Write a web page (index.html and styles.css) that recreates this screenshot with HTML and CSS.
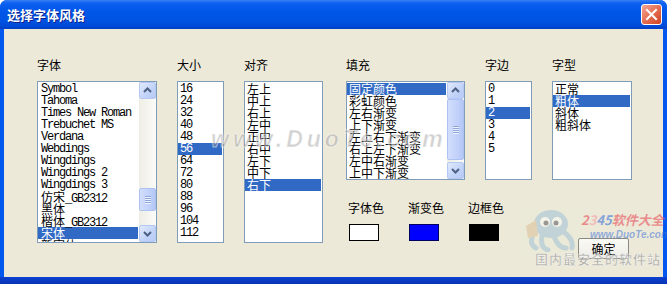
FILE: index.html
```html
<!DOCTYPE html>
<html lang="zh-CN">
<head>
  <meta charset="UTF-8">
  <title>选择字体风格</title>
  <link rel="stylesheet" href="styles.css">
</head>
<body>

<div class="window">
  <div class="titlebar">
    <span class="title">选择字体风格</span>
    <span class="close">
      <svg width="19" height="19" viewBox="0 0 19 19"><path d="M5 5 L14 14 M14 5 L5 14" stroke="#fff" stroke-width="2" stroke-linecap="square"/></svg>
    </span>
  </div>

  <div class="client">
    <div class="group g-font">
      <div class="label">字体</div>
      <div class="list tall">
        <div class="items mono">
          <div>Symbol</div>
          <div>Tahoma</div>
          <div>Times New Roman</div>
          <div>Trebuchet MS</div>
          <div>Verdana</div>
          <div>Webdings</div>
          <div>Wingdings</div>
          <div>Wingdings 2</div>
          <div>Wingdings 3</div>
          <div><span class="cn">仿宋</span>_GB2312</div>
          <div><span class="cn">黑体</span></div>
          <div><span class="cn">楷体</span>_GB2312</div>
          <div class="sel"><span class="cn">宋体</span></div>
          <div><span class="cn">新宋体</span></div>
        </div>
        <div class="scrollbar">
          <div class="sb-btn"><svg width="15" height="15" viewBox="0 0 15 15"><path d="M4 9 L7.5 5.5 L11 9" fill="none" stroke="#4d6185" stroke-width="2"/></svg></div>
          <div class="sb-track"><div class="sb-thumb font-thumb"><i></i><i></i><i></i><i></i></div></div>
          <div class="sb-btn"><svg width="15" height="15" viewBox="0 0 15 15"><path d="M4 6 L7.5 9.5 L11 6" fill="none" stroke="#4d6185" stroke-width="2"/></svg></div>
        </div>
      </div>
    </div>

    <div class="group g-size">
      <div class="label">大小</div>
      <div class="list tall">
        <div class="items mono">
          <div>16</div><div>24</div><div>32</div><div>40</div><div>48</div>
          <div class="sel">56</div>
          <div>64</div><div>72</div><div>80</div><div>88</div><div>96</div>
          <div>104</div><div>112</div>
        </div>
      </div>
    </div>

    <div class="group g-align">
      <div class="label">对齐</div>
      <div class="list tall">
        <div class="items">
          <div>左上</div><div>中上</div><div>右上</div>
          <div>左中</div><div>正中</div><div>右中</div>
          <div>左下</div><div>中下</div>
          <div class="sel">右下</div>
        </div>
      </div>
    </div>

    <div class="right">
      <div class="row-top">
        <div class="group g-fill">
          <div class="label">填充</div>
          <div class="list short">
            <div class="items">
              <div class="sel">固定颜色</div>
              <div>彩虹颜色</div>
              <div>左右渐变</div>
              <div>上下渐变</div>
              <div>左上右下渐变</div>
              <div>右上左下渐变</div>
              <div>左中右渐变</div>
              <div>上中下渐变</div>
            </div>
            <div class="scrollbar">
              <div class="sb-btn"><svg width="15" height="15" viewBox="0 0 15 15"><path d="M4 9 L7.5 5.5 L11 9" fill="none" stroke="#4d6185" stroke-width="2"/></svg></div>
              <div class="sb-track"><div class="sb-thumb fill-thumb"><i></i><i></i><i></i><i></i></div></div>
              <div class="sb-btn"><svg width="15" height="15" viewBox="0 0 15 15"><path d="M4 6 L7.5 9.5 L11 6" fill="none" stroke="#4d6185" stroke-width="2"/></svg></div>
            </div>
          </div>
        </div>

        <div class="group g-edge">
          <div class="label">字边</div>
          <div class="list short">
            <div class="items mono">
              <div>0</div><div>1</div>
              <div class="sel">2</div>
              <div>3</div><div>4</div><div>5</div>
            </div>
          </div>
        </div>

        <div class="group g-style">
          <div class="label">字型</div>
          <div class="list short">
            <div class="items">
              <div>正常</div>
              <div class="sel">粗体</div>
              <div>斜体</div>
              <div>粗斜体</div>
            </div>
          </div>
        </div>
      </div>

      <div class="row-bottom">
        <div class="colors">
          <div class="color-item">
            <div class="label">字体色</div>
            <div class="swatch white"></div>
          </div>
          <div class="color-item">
            <div class="label">渐变色</div>
            <div class="swatch blue"></div>
          </div>
          <div class="color-item">
            <div class="label">边框色</div>
            <div class="swatch black"></div>
          </div>
        </div>
        <button class="ok">确定</button>
      </div>
    </div>
  </div>

  <!-- watermarks from the screenshot source -->
  <div class="wm-site">www.DuoTe.com</div>
  <svg class="wm-mascot" width="52" height="46" viewBox="0 0 52 46">
    <ellipse cx="27" cy="18" rx="17" ry="14" fill="#8fb8d8"/>
    <path d="M10 26 Q4 38 12 42 M18 30 Q16 42 24 44 M30 30 Q34 42 42 42 M40 26 Q50 34 48 42" fill="none" stroke="#8fb8d8" stroke-width="5" stroke-linecap="round"/>
    <circle cx="21" cy="16" r="5" fill="#fff"/><circle cx="33" cy="16" r="5" fill="#fff"/>
    <circle cx="22" cy="17" r="2.5" fill="#334"/><circle cx="32" cy="17" r="2.5" fill="#334"/>
    <path d="M2 20 L12 14 L14 30 L4 32 Z" fill="#d9b38a"/>
  </svg>
  <div class="wm-brand"><span class="r">2</span><span class="p">3</span><span class="b">45</span><span class="r">软件大全</span></div>
  <div class="wm-url">www.DuoTe.com</div>
  <div class="wm-slogan">国内最安全的软件站</div>
</div>

</body>
</html>
```

FILE: styles.css
```css
body {
  margin: 0;
  background: #fff;
  font-family: "Noto Sans CJK SC", sans-serif;
}
.window {
  position: relative;
  width: 667px;
  height: 284px;
  display: flex;
  flex-direction: column;
  border-radius: 7px 7px 0 0;
  overflow: hidden;
  background: linear-gradient(#0058ee calc(100% - 7px), #0b42d0 calc(100% - 7px), #0733b5);
}
.titlebar {
  height: 29px;
  flex: none;
  display: flex;
  align-items: center;
  padding: 0 5px 0 7px;
  background: linear-gradient(#3a80f3 0, #1a6af2 2px, #0a5ef0 4px, #0056e8 12px, #0054e3 20px, #004ad8 26px, #003fc2 29px);
}
.title {
  flex: 1;
  color: #fff;
  font-size: 13px;
  font-weight: bold;
  text-shadow: 1px 1px 0 #0d1f8a;
}
.close {
  width: 21px;
  height: 21px;
  box-sizing: border-box;
  border: 1px solid #fff;
  border-radius: 3px;
  background: linear-gradient(135deg, #f4a793, #e2694d 55%, #cf4322);
  display: flex;
  align-items: center;
  justify-content: center;
}
.client {
  flex: 1;
  margin: 0 4px 7px 4px;
  background: #ece9d8;
  display: flex;
  gap: 20px;
  padding: 30px 0 0 33px;
}
.label {
  font-size: 12px;
  line-height: 12px;
  height: 12px;
  margin-bottom: 10px;
  color: #000;
}
.list {
  box-sizing: border-box;
  border: 1px solid #7f9db9;
  background: #fff;
  display: flex;
  overflow: hidden;
}
.list.tall {
  height: 162px;
}
.list.short {
  height: 99px;
}
.items {
  flex: 1;
  padding-top: 1px;
  overflow: hidden;
  font-size: 12px;
  line-height: 12px;
}
.items div {
  height: 12px;
  padding-left: 2px;
  margin-right: 1px;
  white-space: nowrap;
}
.items.mono {
  font-family: "Liberation Mono", "Noto Sans CJK SC", monospace;
  letter-spacing: -1.2px;
}
.g-font .items div {
  padding-left: 3px;
}
.cn {
  font-family: "Noto Sans CJK SC", sans-serif;
  letter-spacing: 0;
}
.items .sel {
  background: #316ac5;
  color: #fff;
}
.g-font { width: 120px; }
.g-size { width: 47px; }
.g-align { width: 79px; }
.g-fill { width: 119px; }
.g-edge { width: 47px; }
.g-style { width: 80px; }

.scrollbar {
  width: 17px;
  flex: none;
  display: flex;
  flex-direction: column;
  background: linear-gradient(to right, #eeede5, #fbfbf8);
}
.sb-btn {
  height: 17px;
  flex: none;
  box-sizing: border-box;
  border: 1px solid #b5c8f4;
  border-radius: 2px;
  background: linear-gradient(135deg, #e1eafd, #c2d3f8 60%, #b6caf4);
  display: flex;
  align-items: center;
  justify-content: center;
}
.sb-track {
  flex: 1;
}
.sb-thumb {
  box-sizing: border-box;
  border: 1px solid #aec2f2;
  border-radius: 2px;
  background: linear-gradient(to right, #d3defc, #c1d1fa 60%, #b4c7f5);
  display: flex;
  flex-direction: column;
  align-items: center;
  justify-content: center;
  gap: 1px;
}
.sb-thumb i {
  display: block;
  width: 6px;
  height: 1px;
  background: #8ea4da;
  box-shadow: 0 1px 0 #eef2fe;
}
.font-thumb {
  margin-top: 89px;
  height: 23px;
}
.fill-thumb {
  height: 61px;
}

.right {
  margin-left: 3px;
  display: flex;
  flex-direction: column;
  width: 286px;
}
.row-top {
  display: flex;
  gap: 20px;
}
.row-bottom {
  display: flex;
  margin-top: 22px;
}
.colors {
  display: flex;
  gap: 24px;
  padding-left: 2px;
}
.color-item {
  width: 36px;
}
.swatch {
  width: 30px;
  height: 17px;
  box-sizing: border-box;
  margin-left: 1px;
  border: 1px solid #000;
}
.swatch.white { background: #fff; }
.swatch.blue { background: #0000ff; border-color: #000060; }
.swatch.black { background: #000; }
.ok {
  margin: 36px 3px 0 auto;
  width: 51px;
  height: 21px;
  padding: 0;
  box-sizing: border-box;
  border: 1px solid #8a8a84;
  border-radius: 2px;
  background: linear-gradient(#fafaf6, #eeede6);
  font-family: "Noto Sans CJK SC", sans-serif;
  font-size: 12px;
  color: #000;
}

.wm-site {
  position: absolute;
  left: 211px;
  top: 128px;
  font-family: "Liberation Sans", sans-serif;
  font-weight: bold;
  font-style: italic;
  font-size: 23px;
  line-height: 23px;
  letter-spacing: 4px;
  color: rgba(150, 150, 150, 0.45);
  -webkit-text-stroke: 1px rgba(255, 255, 255, 0.5);
  pointer-events: none;
}
.wm-mascot {
  position: absolute;
  left: 524px;
  top: 206px;
  opacity: 0.45;
}
.wm-brand {
  position: absolute;
  left: 581px;
  top: 210px;
  font-size: 13px;
  font-weight: bold;
  font-style: italic;
  opacity: 0.6;
}
.wm-brand .r { color: #e8505b; }
.wm-brand .p { color: #f2a3a8; }
.wm-brand .b { color: #3f73d9; }
.wm-url {
  position: absolute;
  left: 590px;
  top: 229px;
  font-family: "Liberation Sans", sans-serif;
  font-size: 10px;
  font-weight: bold;
  font-style: italic;
  color: rgba(63, 115, 217, 0.55);
}
.wm-slogan {
  position: absolute;
  left: 535px;
  top: 249px;
  font-size: 13px;
  font-weight: bold;
  letter-spacing: 1px;
  color: rgba(140, 140, 140, 0.6);
  -webkit-text-stroke: 0.5px rgba(255, 255, 255, 0.7);
}
```
